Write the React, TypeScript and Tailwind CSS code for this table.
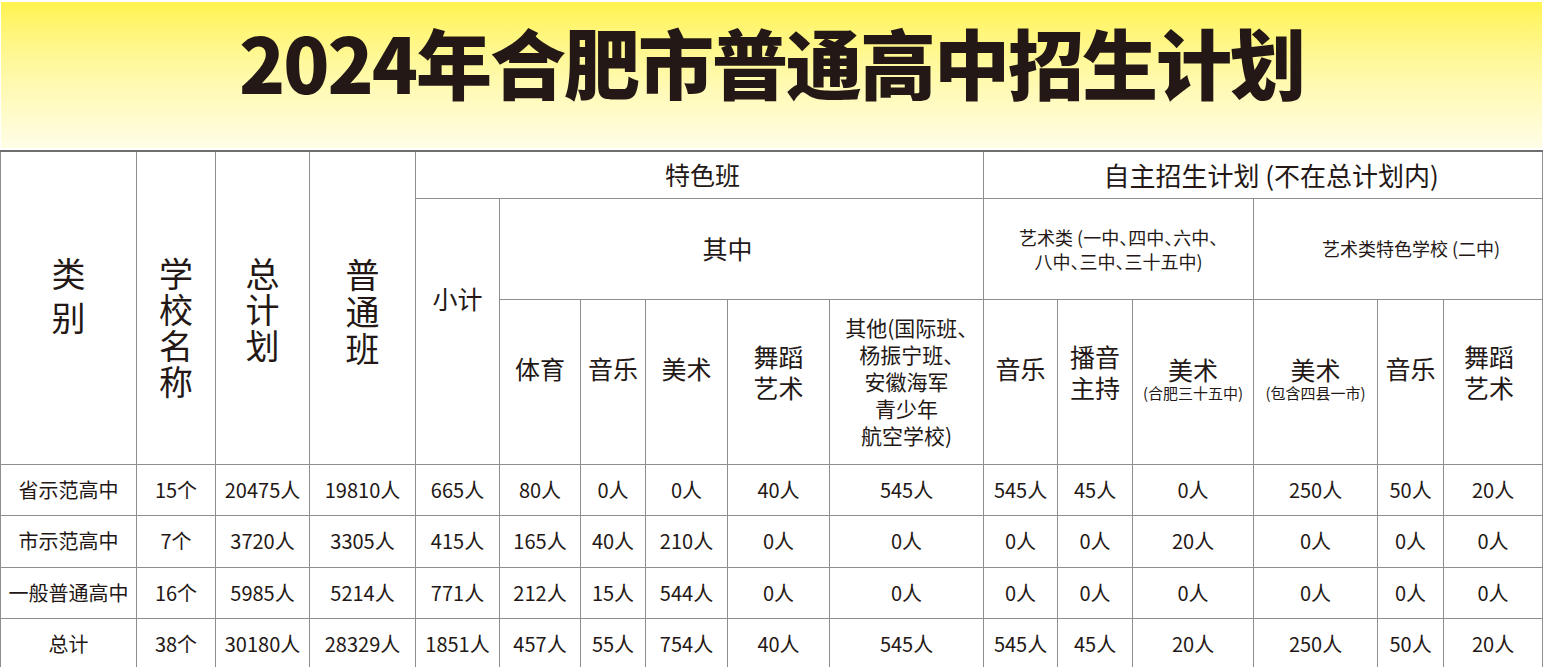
import React from 'react'

const FONT = "font-['Noto_Sans_CJK_SC','Noto_Sans',sans-serif]"
const cell = 'border border-[#8e8e8e] p-0 text-center align-middle font-normal'

const widths = [
  'w-[136px]', 'w-[79px]', 'w-[94px]', 'w-[106px]', 'w-[84px]', 'w-[81px]', 'w-[65px]', 'w-[82px]',
  'w-[102px]', 'w-[154px]', 'w-[74px]', 'w-[75px]', 'w-[121px]', 'w-[124px]', 'w-[66px]', 'w-[99px]',
]

const rows = [
  ['省示范高中', '15个', '20475人', '19810人', '665人', '80人', '0人', '0人', '40人', '545人', '545人', '45人', '0人', '250人', '50人', '20人'],
  ['市示范高中', '7个', '3720人', '3305人', '415人', '165人', '40人', '210人', '0人', '0人', '0人', '0人', '20人', '0人', '0人', '0人'],
  ['一般普通高中', '16个', '5985人', '5214人', '771人', '212人', '15人', '544人', '0人', '0人', '0人', '0人', '0人', '0人', '0人', '0人'],
  ['总计', '38个', '30180人', '28329人', '1851人', '457人', '55人', '754人', '40人', '545人', '545人', '45人', '20人', '250人', '50人', '20人'],
]

export default function App() {
  return (
    <div className={`w-[1543px] bg-white text-[#231815] ${FONT} [font-feature-settings:'halt']`}>
      {/* title band */}
      <div className="ml-[1px] mt-[2px] mb-[2px] flex h-[146px] w-[1541px] justify-center bg-linear-to-b from-[#fff34c] via-[#fff9a8] to-[#fffde6] pt-[21px]">
        <h1 className="text-[76px] font-black leading-[76px] tracking-[-2px] text-[#231815]">
          2024年合肥市普通高中招生计划
        </h1>
      </div>

      <table className="w-[1542px] table-fixed border-collapse border-t-2 border-t-[#6e6e6e]">
        <colgroup>
          {widths.map((w, i) => (
            <col key={i} className={w} />
          ))}
        </colgroup>
        <thead>
          <tr className="h-[47px]">
            <th rowSpan={3} className={`${cell} !align-top pt-[99px] text-[34px] leading-[44px]`}>
              类<br />别
            </th>
            <th rowSpan={3} className={`${cell} !align-top pt-[103px] text-[34px] leading-[36px]`}>
              学<br />校<br />名<br />称
            </th>
            <th rowSpan={3} className={`${cell} !align-top pt-[103px] text-[34px] leading-[36px]`}>
              总<br />计<br />划
            </th>
            <th rowSpan={3} className={`${cell} !align-top pt-[103px] text-[34px] leading-[37px]`}>
              普<br />通<br />班
            </th>
            <th colSpan={6} className={`${cell} pl-[6px] text-[25px]`}>特色班</th>
            <th colSpan={6} className={`${cell} pl-[16px] text-[26px]`}>自主招生计划 (不在总计划内)</th>
          </tr>
          <tr className="h-[101px]">
            <th rowSpan={2} className={`${cell} !align-top pt-[84px] text-[25px] leading-[30px]`}>小计</th>
            <th colSpan={5} className={`${cell} pr-[28px] text-[25px]`}>其中</th>
            <th colSpan={3} className={`${cell} text-[18px] leading-[24px]`}>
              艺术类 (一中、四中、六中、
              <br />
              八中、三中、三十五中)
            </th>
            <th colSpan={3} className={`${cell} pl-[26px] text-[18px]`}>艺术类特色学校 (二中)</th>
          </tr>
          <tr className="h-[165px] text-[25px]">
            <th className={`${cell} pb-[26px]`}>体育</th>
            <th className={`${cell} pb-[26px]`}>音乐</th>
            <th className={`${cell} pb-[26px]`}>美术</th>
            <th className={`${cell} pb-[20px] leading-[31px]`}>
              舞蹈<br />艺术
            </th>
            <th className={`${cell} text-[21px] leading-[27px]`}>
              其他(国际班、<br />杨振宁班、<br />安徽海军<br />青少年<br />航空学校)
            </th>
            <th className={`${cell} pb-[26px]`}>音乐</th>
            <th className={`${cell} pb-[20px] leading-[31px]`}>
              播音<br />主持
            </th>
            <th className={`${cell} pb-[8px] leading-[30px]`}>
              美术
              <div className="text-[15px] leading-[18px]">(合肥三十五中)</div>
            </th>
            <th className={`${cell} pb-[8px] leading-[30px]`}>
              美术
              <div className="text-[15px] leading-[18px]">(包含四县一市)</div>
            </th>
            <th className={`${cell} pb-[26px]`}>音乐</th>
            <th className={`${cell} pb-[20px] pr-[8px] leading-[31px]`}>
              舞蹈<br />艺术
            </th>
          </tr>
        </thead>
        <tbody className="text-[20px]">
          {rows.map((r, i) => (
            <tr key={i} className="h-[51.5px]">
              {r.map((v, j) => (
                <td key={j} className={`${cell} whitespace-nowrap`}>
                  {v}
                </td>
              ))}
            </tr>
          ))}
        </tbody>
      </table>
    </div>
  )
}
